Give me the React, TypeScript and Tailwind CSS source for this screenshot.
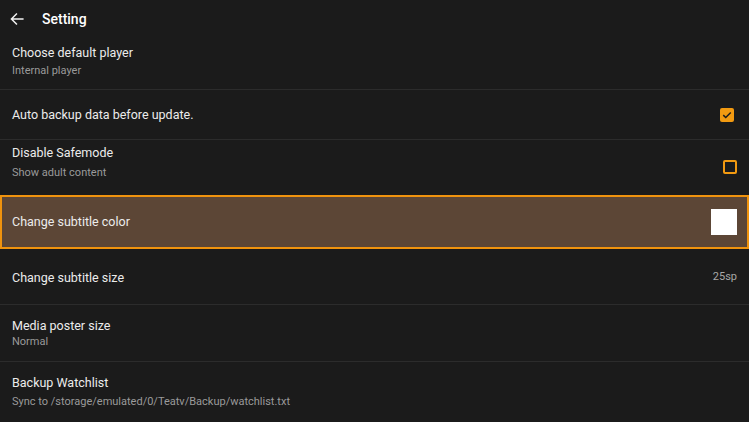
import React from "react";

function Divider() {
  return <div className="h-px bg-[#2c2c2c]" />;
}

const title = "text-[12.5px] leading-[16px] text-[#ececec]";
const sub = "text-[11px] leading-[14px] text-[#9a9a9a]";

export default function App() {
  return (
    <div
      className="h-[422px] w-[749px] overflow-hidden bg-[#1b1b1b]"
      style={{ fontFamily: "Roboto, 'Liberation Sans', sans-serif" }}
    >
      <div className="flex h-[38px] items-center">
        <svg className="ml-[10px] h-[14px] w-[14px]" viewBox="0 0 24 24" fill="none" stroke="#f2f2f2" strokeWidth="2.6" strokeLinecap="square">
          <path d="M22 12H3M11 3.5 2.5 12l8.5 8.5" />
        </svg>
        <span className="ml-[18px] text-[14px] font-medium text-white">Setting</span>
      </div>

      <div className="flex h-[51px] flex-col pl-3 pt-[7px]">
        <span className={title}>Choose default player</span>
        <span className={`mt-[3px] ${sub}`}>Internal player</span>
      </div>
      <Divider />

      <div className="flex h-[49px] items-center justify-between px-3 pt-[1px]">
        <span className={title}>Auto backup data before update.</span>
        <div className="mr-[3px] flex h-[14px] w-[14px] items-center justify-center rounded-[2px] bg-[#f29a11]">
          <svg className="h-[10px] w-[10px]" viewBox="0 0 12 12" fill="none" stroke="#1b1b1b" strokeWidth="1.8">
            <path d="M1.5 6.2 4.5 9 10.5 3" />
          </svg>
        </div>
      </div>
      <Divider />

      <div className="flex h-[55px] items-start justify-between px-3">
        <div className="flex flex-col pt-[5px]">
          <span className={title}>Disable Safemode</span>
          <span className={`mt-[5px] ${sub}`}>Show adult content</span>
        </div>
        <div className="mt-[20px] h-[14px] w-[14px] rounded-[2px] border-2 border-[#f29a11]" />
      </div>

      <div className="flex h-[54px] items-center justify-between border-2 border-[#f0930e] bg-[#5c4636] px-[10px]">
        <span className={title}>Change subtitle color</span>
        <div className="h-[26px] w-[26px] bg-white" />
      </div>

      <div className="flex h-[55px] items-center justify-between px-3 pt-[2px]">
        <span className={title}>Change subtitle size</span>
        <span className="text-[11px] text-[#a8a8a8]">25sp</span>
      </div>
      <Divider />

      <div className="flex h-[56px] flex-col pl-3 pt-[13px]">
        <span className={title}>Media poster size</span>
        <span className={`mt-[1px] ${sub}`}>Normal</span>
      </div>
      <Divider />

      <div className="flex flex-col pl-3 pt-[13px]">
        <span className={title}>Backup Watchlist</span>
        <span className={`mt-[4px] ${sub}`}>Sync to /storage/emulated/0/Teatv/Backup/watchlist.txt</span>
      </div>
    </div>
  );
}
